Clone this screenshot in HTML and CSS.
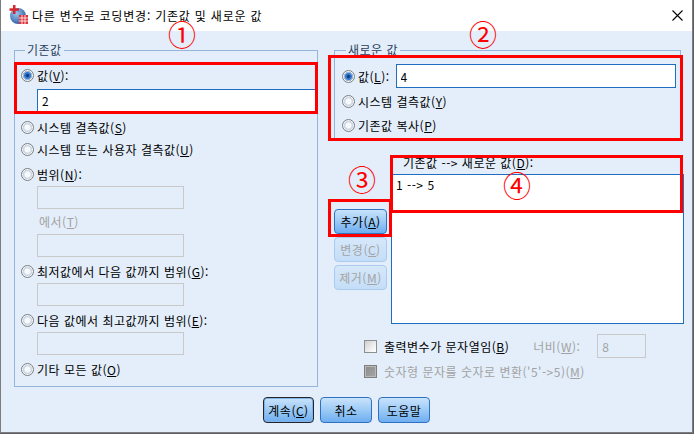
FILE: index.html
```html
<!DOCTYPE html>
<html lang="ko">
<head>
    <meta charset="UTF-8">
    <title>다른 변수로 코딩변경: 기존값 및 새로운 값</title>
    <link rel="stylesheet" href="styles.css">
</head>
<body>
<div class="window">
    <div class="titlebar">
        <svg class="app-icon" width="20" height="20" viewBox="0 0 20 20">
            <defs>
                <radialGradient id="globe" cx="0.4" cy="0.35" r="0.7">
                    <stop offset="0" stop-color="#9cc3ec"/>
                    <stop offset="1" stop-color="#2a5fa6"/>
                </radialGradient>
            </defs>
            <circle cx="9" cy="11" r="8" fill="url(#globe)"/>
            <rect x="4" y="0" width="2.5" height="9" fill="#d6262e"/>
            <rect x="0.5" y="3.3" width="9.5" height="2.5" fill="#d6262e"/>
            <rect x="10" y="10" width="9" height="9" fill="#e0323a"/>
            <path d="M10 13h9M10 16h9M13 10v9M16 10v9" stroke="#fff" stroke-width="0.8"/>
        </svg>
        <span class="title">다른 변수로 코딩변경: 기존값 및 새로운 값</span>
        <svg class="close" width="11" height="11" viewBox="0 0 11 11">
            <path d="M0.5 0.5L10.5 10.5M10.5 0.5L0.5 10.5" stroke="#000" stroke-width="1.1"/>
        </svg>
    </div>

    <div class="dialog">
        <div class="main">
            <fieldset class="group old-group">
                <legend>기존값</legend>
                <div class="opt row-first"><span class="radio on"></span>값(<u>V</u>):</div>
                <input class="field wide" type="text" value="2">
                <div class="opt gap4"><span class="radio"></span>시스템 결측값(<u>S</u>)</div>
                <div class="opt"><span class="radio"></span>시스템 또는 사용자 결측값(<u>U</u>)</div>
                <div class="opt gap3"><span class="radio"></span>범위(<u>N</u>):</div>
                <input class="field short" type="text" disabled>
                <div class="sub-label">에서(<u>T</u>)</div>
                <input class="field short" type="text" disabled>
                <div class="opt gap3"><span class="radio"></span>최저값에서 다음 값까지 범위(<u>G</u>):</div>
                <input class="field short" type="text" disabled>
                <div class="opt gap3"><span class="radio"></span>다음 값에서 최고값까지 범위(<u>E</u>):</div>
                <input class="field short" type="text" disabled>
                <div class="opt gap3"><span class="radio"></span>기타 모든 값(<u>O</u>)</div>
            </fieldset>

            <div class="right">
                <fieldset class="group new-group">
                    <legend>새로운 값</legend>
                    <div class="opt value-row row-first"><span class="radio on"></span>값(<u>L</u>):<input class="field value-input" type="text" value="4"></div>
                    <div class="opt gap2"><span class="radio"></span>시스템 결측값(<u>Y</u>)</div>
                    <div class="opt gap2"><span class="radio"></span>기존값 복사(<u>P</u>)</div>
                </fieldset>

                <div class="list-area">
                    <div class="btn-col">
                        <button class="btn">추가(<u>A</u>)</button>
                        <button class="btn" disabled>변경(<u>C</u>)</button>
                        <button class="btn" disabled>제거(<u>M</u>)</button>
                    </div>
                    <div class="list-col">
                        <div class="list-label">기존값 --&gt; 새로운 값(<u>D</u>):</div>
                        <div class="list">
                            <div class="list-item">1 --&gt; 5</div>
                        </div>
                    </div>
                </div>

                <div class="check-row">
                    <span class="check"></span>출력변수가 문자열임(<u>B</u>)
                    <span class="width-label">너비(<u>W</u>):</span>
                    <input class="field width-input" type="text" value="8" disabled>
                </div>
                <div class="check-row disabled">
                    <span class="check off"></span>숫자형 문자를 숫자로 변환('5'-&gt;5)(<u>M</u>)
                </div>
            </div>
        </div>

        <div class="footer">
            <button class="btn default">계속(<u>C</u>)</button>
            <button class="btn">취소</button>
            <button class="btn">도움말</button>
        </div>
    </div>

    <!-- annotations -->
    <div class="mark box1"></div>
    <div class="mark box2"></div>
    <div class="mark box3"></div>
    <div class="mark box4"></div>
    <span class="num n1">①</span>
    <span class="num n2">②</span>
    <span class="num n3">③</span>
    <span class="num n4">④</span>
</div>
</body>
</html>
```

FILE: styles.css
```css
body {
    margin: 0;
    background: #5b5e63;
    font-family: "Noto Sans CJK KR", "Noto Sans", sans-serif;
    font-size: 12px;
    letter-spacing: 0.5px;
    color: #000;
}
.window {
    position: relative;
    width: 693px;
    height: 433px;
    box-sizing: border-box;
    border: 1px solid #7d7d7d;
    border-top: none;
    background: #e3eefa;
    overflow: hidden;
}
.titlebar {
    height: 31px;
    background: #fff;
    display: flex;
    align-items: center;
    padding-left: 8px;
}
.app-icon {
    margin-top: -2px;
}
.title {
    margin-left: 3px;
    line-height: 16px;
    letter-spacing: 0.8px;
}
.close {
    margin-left: auto;
    margin-right: 9px;
}
.dialog {
    padding: 11px 0 0 13px;
}
.main {
    display: flex;
    gap: 16px;
}

/* group boxes */
.group {
    margin: 0;
    border: 1px solid #94b5dc;
    min-inline-size: 0;
    box-sizing: border-box;
}
.group legend {
    padding: 0 2px;
    margin-left: 4px;
    line-height: 16px;
    color: #2b3f60;
}
.old-group {
    width: 304px;
    height: 345px;
    padding: 0 0 0 6px;
}
.new-group {
    width: 347px;
    height: 97px;
    padding: 0 0 0 7px;
}

/* options */
.opt {
    display: flex;
    align-items: center;
    height: 22px;
    white-space: nowrap;
}
.row-first {
    margin-top: 6px;
}
.gap2 { margin-top: 2px; }
.gap3 { margin-top: 3px; }
.gap4 { margin-top: 4px; }
.radio {
    width: 13px;
    height: 13px;
    box-sizing: border-box;
    border-radius: 50%;
    border: 1px solid #7c7f84;
    background: radial-gradient(circle, #f8fbff 0 2.5px, #cfd9e4 3.5px 4.5px, #f1f4f7 5px);
    margin-right: 3px;
    flex: none;
}
.radio.on {
    background: radial-gradient(circle, #173f80 0 1.2px, #2f78d4 2.2px 3px, #9fb6d2 3.8px 4.5px, #f1f4f7 5px);
}
u {
    text-decoration: underline;
    text-underline-offset: 1px;
}

/* text fields */
.field {
    display: block;
    box-sizing: border-box;
    height: 23px;
    border: 1px solid #1f6ec2;
    background: #fff;
    font: inherit;
    letter-spacing: inherit;
    padding: 0 4px;
    margin: 0;
    outline: none;
}
.field:disabled {
    border-color: #c9c9c9;
    background: transparent;
    color: #a2a2a2;
}
.wide {
    width: 281px;
    margin: 3px 0 0 16px;
}
.short {
    width: 147px;
    margin: 1px 0 0 16px;
}
.sub-label {
    height: 22px;
    line-height: 22px;
    margin: 2px 0 1px 18px;
    color: #a2a2a2;
}
.value-row {
    height: 24px;
}
.value-input {
    width: 280px;
    height: 24px;
    margin-left: 6px;
}

/* list area */
.list-area {
    display: flex;
    gap: 4px;
    margin-top: 16px;
}
.btn-col {
    width: 53px;
    padding-top: 54px;
    display: flex;
    flex-direction: column;
    gap: 3px;
}
.list-label {
    line-height: 16px;
    padding-left: 12px;
    margin-bottom: 3px;
}
.list {
    width: 293px;
    height: 150px;
    box-sizing: border-box;
    border: 1px solid #1f6ec2;
    background: #fff;
    padding: 2px 4px;
}
.list-item {
    line-height: 16px;
}

/* buttons */
.btn {
    height: 25px;
    box-sizing: border-box;
    border: 1px solid #2f72c4;
    border-radius: 4px;
    background: linear-gradient(#c9e3fc, #9ccaf6 50%, #6eaef0);
    font: inherit;
    letter-spacing: inherit;
    color: #000;
    padding: 0;
}
.btn:disabled {
    border-color: #a8cbef;
    background: linear-gradient(#d6e8fa, #c4ddf7);
    color: #a4a4a4;
}

/* checkboxes */
.check-row {
    display: flex;
    align-items: center;
    height: 24px;
    margin: 10px 0 0 30px;
    white-space: nowrap;
}
.check-row + .check-row {
    height: 22px;
    margin-top: 2px;
}
.check-row.disabled {
    color: #a2a2a2;
}
.check {
    width: 13px;
    height: 13px;
    box-sizing: border-box;
    border: 1px solid #8e8f8f;
    background: linear-gradient(135deg, #cfcfcf, #f4f4f4 70%, #fff);
    margin-right: 7px;
    flex: none;
}
.check.off {
    border-color: #7f7f7f;
    background: linear-gradient(135deg, #8a8a8a, #a6a6a6);
    box-shadow: inset 0 0 0 1px #b9b9b9;
}
.width-label {
    margin-left: 24px;
    color: #a2a2a2;
}
.width-input {
    width: 49px;
    height: 24px;
    margin-left: 17px;
}

/* footer */
.footer {
    display: flex;
    justify-content: center;
    gap: 6px;
    margin: 10px 0 0 -13px;
}
.footer .btn {
    width: 52px;
    height: 26px;
}
.btn.default {
    width: 51px;
    border-color: #23272d;
    box-shadow: inset 0 0 0 1px #7fb3ea;
}

/* red annotations */
.mark {
    position: absolute;
    border: 3px solid #ff0000;
    box-sizing: border-box;
}
.box1 { left: 13px; top: 62px; width: 304px; height: 52px; }
.box2 { left: 327px; top: 55px; width: 355px; height: 86px; }
.box3 { left: 327px; top: 199px; width: 64px; height: 38px; }
.box4 { left: 389px; top: 155px; width: 293px; height: 58px; }
.num {
    position: absolute;
    font-size: 28px;
    line-height: 20px;
    letter-spacing: 0;
    color: #ff0000;
}
.n1 { left: 167px; top: 24px; }
.n2 { left: 468px; top: 24px; }
.n3 { left: 347px; top: 169px; }
.n4 { left: 502px; top: 175px; }
```
